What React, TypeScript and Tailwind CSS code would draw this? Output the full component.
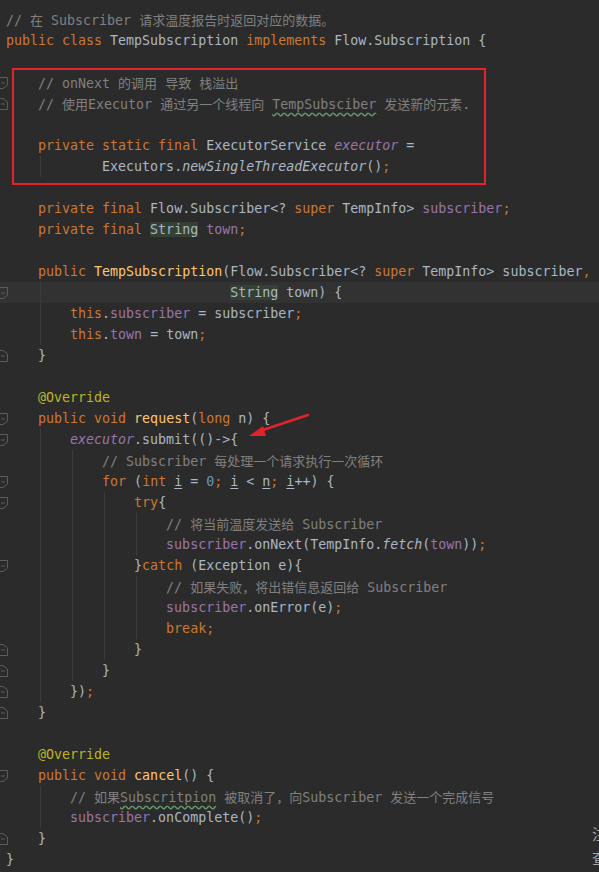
import React from 'react';

type Kind = 'k' | 'c' | 'd' | 'f' | 'fi' | 'm' | 'a' | 'n' | 'it' | 'u' | 'hl' | 'typo';
type Tok = [Kind, string];

const kindClass: Record<Kind, string> = {
  k: 'text-[#cc7832]',
  c: 'text-[#808080]',
  d: 'text-[#a9b7c6]',
  f: 'text-[#9876aa]',
  fi: 'text-[#9876aa] italic',
  m: 'text-[#ffc66d]',
  a: 'text-[#bbb529]',
  n: 'text-[#6897bb]',
  it: 'text-[#a9b7c6] italic',
  u: 'text-[#a9b7c6] underline underline-offset-2',
  hl: 'text-[#a9b7c6] bg-[#344134]',
  typo: 'text-[#808080] underline decoration-wavy decoration-[#659c6b] underline-offset-[3px]',
};

const sp = (n: number): Tok => ['d', ' '.repeat(n)];

// one entry per editor line
const lines: Tok[][] = [
  [['c', '// 在 Subscriber 请求温度报告时返回对应的数据。']],
  [['k', 'public class '], ['d', 'TempSubscription '], ['k', 'implements '], ['d', 'Flow.Subscription {']],
  [],
  [sp(4), ['c', '// onNext 的调用 导致 栈溢出']],
  [sp(4), ['c', '// 使用Executor 通过另一个线程向 '], ['typo', 'TempSubsciber'], ['c', ' 发送新的元素.']],
  [],
  [sp(4), ['k', 'private static final '], ['d', 'ExecutorService '], ['fi', 'executor'], ['d', ' =']],
  [sp(12), ['d', 'Executors.'], ['it', 'newSingleThreadExecutor'], ['d', '()'], ['k', ';']],
  [],
  [sp(4), ['k', 'private final '], ['d', 'Flow.Subscriber<? '], ['k', 'super'], ['d', ' TempInfo> '], ['f', 'subscriber'], ['k', ';']],
  [sp(4), ['k', 'private final '], ['hl', 'String'], ['d', ' '], ['f', 'town'], ['k', ';']],
  [],
  [sp(4), ['k', 'public '], ['m', 'TempSubscription'], ['d', '(Flow.Subscriber<? '], ['k', 'super'], ['d', ' TempInfo> subscriber'], ['k', ',']],
  [sp(28), ['hl', 'String'], ['d', ' town) {']],
  [sp(8), ['k', 'this'], ['d', '.'], ['f', 'subscriber'], ['d', ' = subscriber'], ['k', ';']],
  [sp(8), ['k', 'this'], ['d', '.'], ['f', 'town'], ['d', ' = town'], ['k', ';']],
  [sp(4), ['d', '}']],
  [],
  [sp(4), ['a', '@Override']],
  [sp(4), ['k', 'public void '], ['m', 'request'], ['d', '('], ['k', 'long'], ['d', ' n) {']],
  [sp(8), ['fi', 'executor'], ['d', '.submit(()->{']],
  [sp(12), ['c', '// Subscriber 每处理一个请求执行一次循环']],
  [sp(12), ['k', 'for'], ['d', ' ('], ['k', 'int'], ['d', ' '], ['u', 'i'], ['d', ' = '], ['n', '0'], ['k', ';'], ['d', ' '], ['u', 'i'], ['d', ' < '], ['u', 'n'], ['k', ';'], ['d', ' '], ['u', 'i'], ['d', '++) {']],
  [sp(16), ['k', 'try'], ['d', '{']],
  [sp(20), ['c', '// 将当前温度发送给 Subscriber']],
  [sp(20), ['f', 'subscriber'], ['d', '.onNext(TempInfo.'], ['it', 'fetch'], ['d', '('], ['f', 'town'], ['d', '))'], ['k', ';']],
  [sp(16), ['d', '}'], ['k', 'catch'], ['d', ' (Exception e){']],
  [sp(20), ['c', '// 如果失败，将出错信息返回给 Subscriber']],
  [sp(20), ['f', 'subscriber'], ['d', '.onError(e)'], ['k', ';']],
  [sp(20), ['k', 'break;']],
  [sp(16), ['d', '}']],
  [sp(12), ['d', '}']],
  [sp(8), ['d', '})'], ['k', ';']],
  [sp(4), ['d', '}']],
  [],
  [sp(4), ['a', '@Override']],
  [sp(4), ['k', 'public void '], ['m', 'cancel'], ['d', '() {']],
  [sp(8), ['c', '// 如果'], ['typo', 'Subscritpion'], ['c', ' 被取消了，向Subscriber 发送一个完成信号']],
  [sp(8), ['f', 'subscriber'], ['d', '.onComplete()'], ['k', ';']],
  [sp(4), ['d', '}']],
  [['d', '}']],
];

// indent guides: x position and line range (inclusive)
const guides: { left: string; from: number; to: number }[] = [
  { left: 'left-[40px]', from: 7, to: 7 },
  { left: 'left-[40px]', from: 13, to: 15 },
  { left: 'left-[40px]', from: 20, to: 32 },
  { left: 'left-[72px]', from: 21, to: 31 },
  { left: 'left-[104px]', from: 23, to: 30 },
  { left: 'left-[136px]', from: 24, to: 25 },
  { left: 'left-[136px]', from: 27, to: 29 },
  { left: 'left-[40px]', from: 37, to: 38 },
];

const foldStart = [3, 13, 19, 20, 22, 23, 26, 36];
const foldEnd = [4, 16, 30, 31, 32, 33, 39];

const cjk = /([\u3000-\u303f\u4e00-\u9fff\uff00-\uffef]+)/;

function Token({ kind, text }: { kind: Kind; text: string }) {
  const parts = text.split(cjk);
  return (
    <span className={kindClass[kind]}>
      {parts.map((p, i) =>
        cjk.test(p) ? (
          <span key={i} className="font-['Noto_Sans_CJK_SC','DejaVu_Sans',sans-serif] text-[13px]">
            {p}
          </span>
        ) : (
          <React.Fragment key={i}>{p}</React.Fragment>
        )
      )}
    </span>
  );
}

function FoldMark({ end }: { end?: boolean }) {
  return (
    <svg width="9" height="12" viewBox="0 0 9 12" className="absolute left-0 top-[5px]">
      {end ? (
        <path d="M-2 11.5 H7.5 V4 L3 0.5 H-2" fill="none" stroke="#5a5d5f" strokeWidth="1" />
      ) : (
        <path d="M-2 0.5 H7.5 V8 L3 11.5 H-2" fill="none" stroke="#5a5d5f" strokeWidth="1" />
      )}
      <path d="M1 6 H5" stroke="#5a5d5f" strokeWidth="1" />
    </svg>
  );
}

export default function App() {
  return (
    <div className="relative w-[599px] h-[872px] overflow-hidden bg-[#2b2b2b] font-['DejaVu_Sans_Mono','Liberation_Mono','Noto_Sans_CJK_SC',monospace] text-[13.3px]">
      <div className="flex flex-col pt-[9px]">
        {lines.map((toks, i) => (
          <div
            key={i}
            className={`relative h-[21px] leading-[21px] pl-[6px] whitespace-pre ${i === 13 ? 'bg-[#323232]' : ''}`}
          >
            {guides
              .filter((g) => i >= g.from && i <= g.to)
              .map((g, j) => (
                <span key={j} className={`absolute top-0 h-[21px] w-px bg-[#3b3b3b] ${g.left}`} />
              ))}
            {foldStart.includes(i) && <FoldMark />}
            {foldEnd.includes(i) && <FoldMark end />}
            <span className="relative">
              {toks.map(([k, t], j) => (
                <Token key={j} kind={k} text={t} />
              ))}
            </span>
          </div>
        ))}
      </div>

      {/* red annotation box */}
      <div className="absolute left-[12px] top-[68px] w-[474px] h-[117px] border-2 border-[#e3232b]" />

      {/* red arrow */}
      <svg className="absolute left-0 top-0" width="599" height="872" viewBox="0 0 599 872">
        <line x1="308" y1="415" x2="260" y2="431" stroke="#e3232b" strokeWidth="2.5" strokeLinecap="round" />
        <polygon points="249,436 263,426 266,436" fill="#e3232b" />
      </svg>

      {/* glyphs cut off by the right edge, as in the screenshot */}
      <div className="absolute left-[592px] top-[822px] flex flex-col text-[#a8a8a8] font-['Noto_Sans_CJK_SC',sans-serif] text-[15px] leading-[24px]">
        <span>注</span>
        <span>查</span>
      </div>
    </div>
  );
}
